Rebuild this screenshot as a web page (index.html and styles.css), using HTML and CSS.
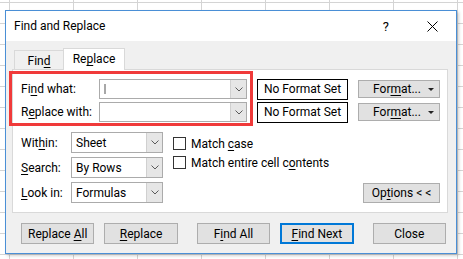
FILE: index.html
```html
<!DOCTYPE html>
<html lang="en">
<head>
  <meta charset="UTF-8">
  <title>Find and Replace</title>
  <link rel="stylesheet" href="styles.css">
</head>
<body>

<div class="dialog">
  <div class="titlebar">
    <span class="title">Find and Replace</span>
    <span class="help">?</span>
    <svg class="close-x" width="11" height="11" viewBox="0 0 11 11">
      <path d="M0.5 0.5 L10.5 10.5 M10.5 0.5 L0.5 10.5" stroke="#000" stroke-width="1" fill="none" />
    </svg>
  </div>

  <div class="dialog-body">
    <div class="tabs">
      <div class="tab">Fin<u>d</u></div>
      <div class="tab active">Re<u>p</u>lace</div>
    </div>

    <div class="panel">
      <div class="highlight"></div>

      <div class="find-grid">
        <label class="field-label">Fi<u>n</u>d what:</label>
        <div class="combo">
          <span class="caret"></span>
          <span class="drop"><svg width="8" height="5" viewBox="0 0 8 5"><path d="M0.5 0.5 L4 4 L7.5 0.5" stroke="#5a5a5a" fill="none" /></svg></span>
        </div>
        <div class="format-preview">No Format Set</div>
        <button class="btn format"><span>For<u>m</u>at...</span><span class="arrow"></span></button>

        <label class="field-label">R<u>e</u>place with:</label>
        <div class="combo">
          <span class="drop"><svg width="8" height="5" viewBox="0 0 8 5"><path d="M0.5 0.5 L4 4 L7.5 0.5" stroke="#5a5a5a" fill="none" /></svg></span>
        </div>
        <div class="format-preview">No Format Set</div>
        <button class="btn format"><span>For<u>m</u>at...</span><span class="arrow"></span></button>
      </div>

      <div class="options-grid">
        <label class="field-label">Wit<u>h</u>in:</label>
        <div class="combo select">
          <span class="value">Sheet</span>
          <span class="drop"><svg width="8" height="5" viewBox="0 0 8 5"><path d="M0.5 0.5 L4 4 L7.5 0.5" stroke="#5a5a5a" fill="none" /></svg></span>
        </div>
        <div class="checks">
          <div class="check"><span class="box"></span><span>Match <u>c</u>ase</span></div>
          <div class="check"><span class="box"></span><span>Match entire cell c<u>o</u>ntents</span></div>
        </div>

        <label class="field-label"><u>S</u>earch:</label>
        <div class="combo select">
          <span class="value">By Rows</span>
          <span class="drop"><svg width="8" height="5" viewBox="0 0 8 5"><path d="M0.5 0.5 L4 4 L7.5 0.5" stroke="#5a5a5a" fill="none" /></svg></span>
        </div>

        <label class="field-label"><u>L</u>ook in:</label>
        <div class="combo select">
          <span class="value">Formulas</span>
          <span class="drop"><svg width="8" height="5" viewBox="0 0 8 5"><path d="M0.5 0.5 L4 4 L7.5 0.5" stroke="#5a5a5a" fill="none" /></svg></span>
        </div>
        <button class="btn options-btn">Op<u>t</u>ions &lt; &lt;</button>
      </div>
    </div>

    <div class="actions">
      <button class="btn action">Replace <u>A</u>ll</button>
      <button class="btn action"><u>R</u>eplace</button>
      <button class="btn action wide-gap">F<u>i</u>nd All</button>
      <button class="btn action default"><u>F</u>ind Next</button>
      <button class="btn action wide-gap">Close</button>
    </div>
  </div>
</div>

</body>
</html>
```

FILE: styles.css
```css
html, body {
  margin: 0;
  padding: 0;
  height: 100%;
}
body {
  font-family: "Segoe UI", Roboto, sans-serif;
  font-size: 12px;
  color: #000;
  background-color: #fff;
  background-image:
    linear-gradient(to right, #d4d4d4 1px, transparent 1px),
    linear-gradient(to bottom, #d4d4d4 1px, transparent 1px);
  background-size: 64px 21px;
  background-position: 9px 2px;
  overflow: hidden;
}
u {
  text-decoration-thickness: 1px;
  text-underline-offset: 2px;
}
.dialog {
  margin: 10px 0 0 5px;
  width: 452px;
  height: 244px;
  box-sizing: border-box;
  border: 1px solid #4a8fd6;
  background: #f0f0f0;
  box-shadow: 2px 2px 3px rgba(0, 0, 0, 0.18);
}
.titlebar {
  height: 30px;
  background: #fff;
  display: flex;
  align-items: center;
  padding-left: 8px;
}
.title {
  flex: 1;
}
.help {
  margin-right: 38px;
  font-size: 13px;
}
.close-x {
  margin-right: 18px;
}
.dialog-body {
  padding: 7px 0 0 6px;
}
.tabs {
  display: flex;
  align-items: flex-end;
  margin-left: 2px;
  margin-bottom: -1px;
  position: relative;
  z-index: 1;
}
.tab {
  box-sizing: border-box;
  width: 49px;
  height: 20px;
  border: 1px solid #d9d9d9;
  border-right: none;
  background: #f0f0f0;
  line-height: 20px;
  text-align: center;
}
.tab.active {
  width: 62px;
  height: 22px;
  border-right: 1px solid #d9d9d9;
  border-bottom: none;
  background: #fff;
  line-height: 21px;
}
.panel {
  position: relative;
  width: 436px;
  height: 144px;
  box-sizing: border-box;
  border: 1px solid #d9d9d9;
  background: #fff;
  padding: 9px 7px 0 8px;
}
.highlight {
  position: absolute;
  left: -4px;
  top: 1px;
  width: 244px;
  height: 55px;
  box-sizing: border-box;
  border: 3px solid #f03a3a;
  pointer-events: none;
}
.find-grid {
  display: grid;
  grid-template-columns: 68px 148px 91px 82px;
  grid-auto-rows: 20px;
  column-gap: 10px;
  row-gap: 3px;
  align-items: center;
}
.field-label {
  grid-column: 1;
  line-height: 20px;
  white-space: nowrap;
}
.combo {
  display: flex;
  align-items: center;
  height: 20px;
  box-sizing: border-box;
  border: 1px solid #ababab;
  background: #fff;
}
.combo .caret {
  width: 2px;
  height: 10px;
  margin-left: 4px;
  background: #a8a8a8;
}
.combo .drop {
  margin-left: auto;
  width: 16px;
  height: 100%;
  box-sizing: border-box;
  border-left: 1px solid #d0d0d0;
  background: #e6e6e6;
  display: flex;
  align-items: center;
  justify-content: center;
}
.combo.select {
  grid-column: 2;
  height: 21px;
}
.combo .value {
  padding-left: 4px;
}
.format-preview {
  height: 21px;
  box-sizing: border-box;
  border: 1px solid #000;
  display: flex;
  align-items: center;
  justify-content: center;
}
.btn {
  font-family: inherit;
  font-size: 12px;
  color: #000;
  background: #e1e1e1;
  border: 1px solid #adadad;
  padding: 0;
  margin: 0;
  box-sizing: border-box;
}
.btn.format {
  height: 18px;
  display: flex;
  align-items: center;
  justify-content: center;
  position: relative;
  padding-right: 4px;
}
.btn.format .arrow {
  position: absolute;
  right: 5px;
  top: 7px;
  width: 0;
  height: 0;
  border-left: 3px solid transparent;
  border-right: 3px solid transparent;
  border-top: 3px solid #222;
}
.options-grid {
  margin-top: 10px;
  display: grid;
  grid-template-columns: 50px 92px 1fr 77px;
  grid-template-rows: 21px 21px 21px;
  row-gap: 4px;
  align-items: center;
}
.checks {
  grid-column: 3;
  grid-row: 1 / span 2;
  align-self: start;
  margin-left: 10px;
  margin-top: 2px;
}
.check {
  display: flex;
  align-items: center;
  height: 19px;
}
.check .box {
  width: 13px;
  height: 13px;
  box-sizing: border-box;
  border: 1px solid #333;
  background: #fff;
  margin-right: 5px;
}
.options-btn {
  grid-column: 4;
  grid-row: 3;
  height: 20px;
}
.actions {
  display: flex;
  margin: 10px 0 0 9px;
}
.btn.action {
  width: 74px;
  height: 21px;
  margin-right: 10px;
}
.btn.action.wide-gap {
  margin-left: 9px;
}
.btn.action.default {
  border: 2px solid #0078d7;
}
```
